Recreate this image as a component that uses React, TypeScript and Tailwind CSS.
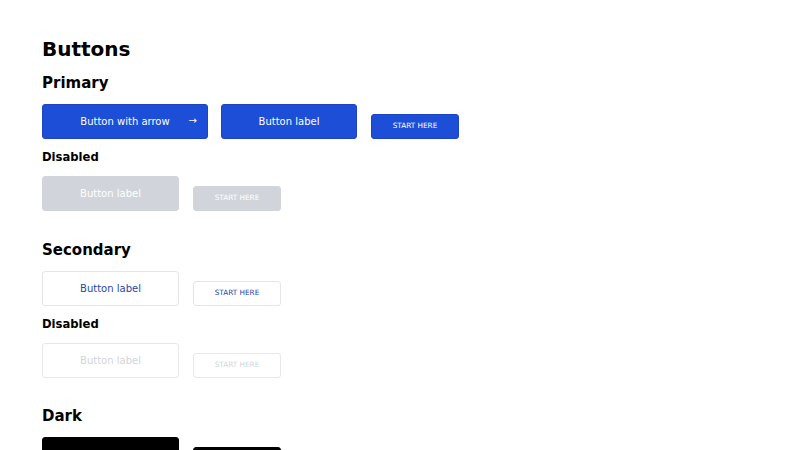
import React from "react";

const font = { fontFamily: '"DejaVu Sans", sans-serif' };

const styles: Record<string, string> = {
  primary: "bg-[#1d4ed8] border-[#1e44c4] text-white",
  primaryDisabled: "bg-[#d1d5db] border-[#d1d5db] text-white",
  secondary: "bg-white border-[#e3e5e9] text-[#2747a8]",
  secondaryDisabled: "bg-white border-[#e6e8eb] text-[#d1d5db]",
  dark: "bg-black border-black text-white",
};

function Big({ variant, children, arrow }: { variant: string; children: React.ReactNode; arrow?: boolean }) {
  return (
    <div
      className={`relative flex h-[35px] items-center justify-center rounded-[3px] border text-[10px] ${styles[variant]} ${arrow ? "w-[166px]" : variant === "primary" ? "w-[136px]" : "w-[137px]"}`}
    >
      <span>{children}</span>
      {arrow && <span className="absolute right-[10px] top-[9px] text-[10px] leading-[14px]">→</span>}
    </div>
  );
}

function Small({ variant }: { variant: string }) {
  return (
    <div className={`flex h-[25px] w-[88px] items-center justify-center rounded-[3px] border text-[7.3px] ${styles[variant]}`}>
      START HERE
    </div>
  );
}

export default function App() {
  return (
    <div className="h-[450px] w-[800px] overflow-hidden bg-white pl-[42px] pt-[37px] text-black" style={font}>
      <h1 className="text-[20px] font-bold leading-[24px]">Buttons</h1>
      <h2 className="mt-[12px] text-[15px] font-bold leading-[20px]">Primary</h2>
      <div className="mt-[11px] flex items-end gap-[13px]">
        <Big variant="primary" arrow>Button with arrow</Big>
        <Big variant="primary">Button label</Big>
        <div className="ml-[1px]"><Small variant="primary" /></div>
      </div>
      <h3 className="mt-[10px] text-[11.6px] font-bold leading-[16px]">Disabled</h3>
      <div className="mt-[11px] flex items-end gap-[14px]">
        <Big variant="primaryDisabled">Button label</Big>
        <Small variant="primaryDisabled" />
      </div>
      <h2 className="mt-[29px] text-[15px] font-bold leading-[20px]">Secondary</h2>
      <div className="mt-[11px] flex items-end gap-[14px]">
        <Big variant="secondary">Button label</Big>
        <Small variant="secondary" />
      </div>
      <h3 className="mt-[10px] text-[11.6px] font-bold leading-[16px]">Disabled</h3>
      <div className="mt-[11px] flex items-end gap-[14px]">
        <Big variant="secondaryDisabled">Button label</Big>
        <Small variant="secondaryDisabled" />
      </div>
      <h2 className="mt-[28px] text-[15px] font-bold leading-[20px]">Dark</h2>
      <div className="mt-[11px] flex items-end gap-[14px]">
        <Big variant="dark">Button label</Big>
        <Small variant="dark" />
      </div>
    </div>
  );
}
